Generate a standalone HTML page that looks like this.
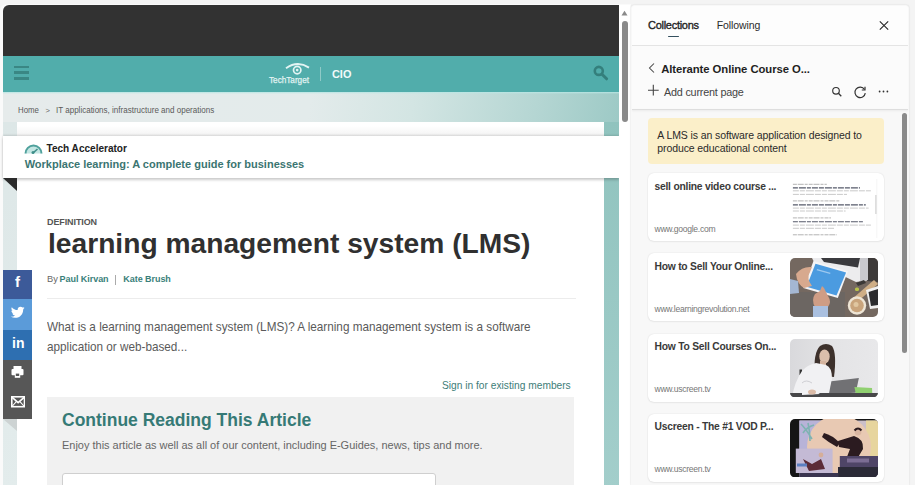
<!DOCTYPE html>
<html><head><meta charset="utf-8">
<style>
*{margin:0;padding:0;box-sizing:border-box}
html,body{width:915px;height:485px;overflow:hidden;background:#f4f4f4;font-family:"Liberation Sans",sans-serif}
.a{position:absolute}
.t{position:absolute;white-space:nowrap;line-height:1}
.b{font-weight:bold}
</style></head><body>
<!-- ===== LEFT PAGE ===== -->
<div class="a" style="left:0px;top:4px;width:631px;height:481px;background:#fafafa;border-radius:7px 0 0 0"></div>
<div class="a" style="left:3px;top:5px;width:616px;height:480px;overflow:hidden;border-radius:6px 0 0 0;background:#fff">
  <div class="a" style="left:0;top:0;width:616px;height:51px;background:#323232"></div>
  <div class="a" style="left:0;top:51px;width:616px;height:36px;background:#51adab"></div>
  <div class="a" style="left:0;top:87px;width:616px;height:400px;background:linear-gradient(100deg,#e6ebeb 0%,#e3ebeb 45%,#d3e5e3 60%,#b5d6d3 78%,#9ac8c4 92%,#90c3be 100%)"></div>
  <div class="a" style="left:0;top:117px;width:14px;height:370px;background:linear-gradient(180deg,#dde7e7,#e3ecec)"></div><div class="a" style="left:0;top:87px;width:616px;height:2px;background:linear-gradient(180deg,#b9e6e4,rgba(235,248,248,0))"></div>
  <div class="a" style="left:14px;top:117px;width:587px;height:370px;background:#fff"></div><div class="a" style="left:601px;top:117px;width:15px;height:370px;background:linear-gradient(180deg,#90c3be,#a3cecb)"></div>
</div>
<!-- hamburger -->
<div class="a" style="left:14px;top:65.5px;width:14.5px;height:2.3px;background:#3a8784"></div>
<div class="a" style="left:14px;top:71.4px;width:14.5px;height:2.3px;background:#3a8784"></div>
<div class="a" style="left:14px;top:77.4px;width:14.5px;height:2.3px;background:#3a8784"></div>
<!-- techtarget logo -->
<svg class="a" style="left:283px;top:62px" width="28" height="14" viewBox="0 0 28 14">
  <path d="M3 6.2 Q14.5 -1.8 26 5.6" fill="none" stroke="#e3f4f3" stroke-width="1.9"/>
  <circle cx="14.2" cy="8.1" r="3.7" fill="none" stroke="#e3f4f3" stroke-width="1.7"/>
  <circle cx="14.2" cy="8.1" r="1.3" fill="#e3f4f3"/>
</svg>
<div class="t" style="left:268.8px;top:74.9px;font-size:9.6px;color:#e3f4f3;transform:scaleX(0.852);transform-origin:0 0;-webkit-text-stroke:0.25px #e3f4f3">TechTarget</div>
<div class="a" style="left:320px;top:67px;width:1px;height:14px;background:#8fcac7"></div>
<div class="t b" style="left:332px;top:68.8px;font-size:10.9px;color:#f2fafa">CIO</div>
<!-- search -->
<svg class="a" style="left:590px;top:64px" width="20" height="18" viewBox="0 0 20 18">
  <circle cx="8.8" cy="6.9" r="4" fill="none" stroke="#347f7c" stroke-width="2.6"/>
  <line x1="12" y1="10.2" x2="16.6" y2="14.8" stroke="#347f7c" stroke-width="3" stroke-linecap="round"/>
</svg>
<!-- breadcrumb -->
<div class="t" style="left:17.9px;top:106.4px;font-size:8.7px;color:#5a5a5a;transform:scaleX(0.9);transform-origin:0 0">Home</div>
<div class="t" style="left:45.5px;top:107.3px;font-size:7.6px;color:#666">&gt;</div>
<div class="t" style="left:56.3px;top:106.4px;font-size:8.7px;color:#5a5a5a;transform:scaleX(0.9236);transform-origin:0 0">IT applications, infrastructure and operations</div>
<!-- sticky bar -->
<div class="a" style="left:17px;top:126px;width:587px;height:10px;background:linear-gradient(180deg,#fff,#f3f3f3)"></div><div class="a" style="left:3px;top:136px;width:616px;height:42px;background:#fff;box-shadow:0 -1px 2px rgba(0,0,0,0.13),0 1.5px 2.5px rgba(0,0,0,0.2)"></div>
<svg class="a" style="left:24px;top:142.5px" width="19" height="11" viewBox="0 0 19 11">
  <path d="M1.5 10.5 A8 8 0 0 1 17.5 10.5 Z" fill="#c4e6e3"/>
  <path d="M1.5 10.5 A8 8 0 0 1 17.5 10.5" fill="none" stroke="#4fa19c" stroke-width="2"/>
  <line x1="9" y1="10" x2="13.5" y2="6" stroke="#3f8f8a" stroke-width="1.6"/>
  <circle cx="9" cy="9.5" r="1.5" fill="#3f8f8a"/>
</svg>
<div class="t b" style="left:46.5px;top:143.8px;font-size:10.06px;color:#222">Tech Accelerator</div>
<div class="t b" style="left:24.7px;top:158.7px;font-size:11px;color:#3b7571">Workplace learning: A complete guide for businesses</div>
<!-- corner triangle -->
<svg class="a" style="left:3px;top:178px" width="14" height="13" viewBox="0 0 14 13"><path d="M0 0 H14 V13 Z" fill="#2b2b2b"/></svg>
<!-- article -->
<div class="t b" style="left:47px;top:218.2px;font-size:9px;letter-spacing:-0.1px;color:#555">DEFINITION</div>
<div class="t b" style="left:48px;top:229.2px;font-size:28.2px;color:#303030">learning management system (LMS)</div>
<div class="t" style="left:47px;top:274.7px;font-size:9.3px;color:#666">By</div>
<div class="t b" style="left:59.6px;top:275px;font-size:9px;letter-spacing:-0.05px;color:#3a7f7a">Paul Kirvan</div>
<div class="a" style="left:115px;top:274.5px;width:1px;height:10px;background:#aaa"></div>
<div class="t b" style="left:123.3px;top:275px;font-size:9px;letter-spacing:-0.05px;color:#3a7f7a">Kate Brush</div>
<div class="a" style="left:47px;top:298px;width:529px;height:1px;background:#ececec"></div>
<div class="t" style="left:47.3px;top:320px;font-size:13px;color:#5a5a5a;transform:scaleX(0.902);transform-origin:0 0">What is a learning management system (LMS)? A learning management system is a software</div>
<div class="t" style="left:47.3px;top:340.3px;font-size:13px;color:#5a5a5a;transform:scaleX(0.902);transform-origin:0 0">application or web-based...</div>
<div class="t" style="left:441.8px;top:379.5px;font-size:11.2px;color:#3d7d78;transform:scaleX(0.912);transform-origin:0 0">Sign in for existing members</div>
<div class="a" style="left:47px;top:397px;width:527px;height:90px;background:#f1f1f1"></div>
<div class="t b" style="left:62px;top:411.5px;font-size:17.5px;color:#367a76">Continue Reading This Article</div>
<div class="t" style="left:62px;top:438.7px;font-size:11.6px;color:#666;transform:scaleX(0.946);transform-origin:0 0">Enjoy this article as well as all of our content, including E-Guides, news, tips and more.</div>
<div class="a" style="left:62px;top:473px;width:374px;height:20px;background:#fff;border:1px solid #cfcfcf;border-radius:3px"></div>
<!-- social -->
<div class="a" style="left:3px;top:269.5px;width:29px;height:29.5px;background:#3c5a99"></div>
<div class="a" style="left:3px;top:299px;width:29px;height:30.5px;background:#5b9bd9"></div>
<div class="a" style="left:3px;top:329.5px;width:29px;height:30.5px;background:#2e6fb1"></div>
<div class="a" style="left:3px;top:360px;width:29px;height:30px;background:#575757"></div>
<div class="a" style="left:3px;top:390px;width:29px;height:28.5px;background:#565656"></div>
<svg class="a" style="left:3px;top:418.5px" width="14" height="12" viewBox="0 0 14 12"><path d="M0 0 H14 V12 Z" fill="#cdd3d3"/></svg>
<div class="t b" style="left:15px;top:274.3px;font-size:15px;color:#fff">f</div>
<svg class="a" style="left:11px;top:306px" width="14" height="13" viewBox="0 0 24 20">
<path fill="#fff" d="M23.6 2.3c-.9.4-1.8.6-2.8.8 1-.6 1.8-1.6 2.1-2.7-.9.6-2 1-3.1 1.2C18.9.6 17.6 0 16.2 0c-2.7 0-4.8 2.2-4.8 4.8 0 .4 0 .8.1 1.1C7.4 5.7 3.8 3.8 1.4.8 1 1.5.7 2.4.7 3.3c0 1.7.9 3.2 2.2 4-.8 0-1.5-.2-2.2-.6v.1c0 2.3 1.7 4.3 3.9 4.7-.4.1-.8.2-1.3.2-.3 0-.6 0-.9-.1.6 1.9 2.4 3.3 4.5 3.4-1.7 1.3-3.7 2.1-6 2.1-.4 0-.8 0-1.2-.1 2.1 1.4 4.7 2.2 7.4 2.2 8.9 0 13.7-7.4 13.7-13.7v-.6c1-.7 1.8-1.6 2.4-2.6z"/></svg>
<div class="t b" style="left:12px;top:335.5px;font-size:14px;color:#fff">in</div>
<svg class="a" style="left:11px;top:366px" width="13" height="12" viewBox="0 0 13 12">
<rect x="2.5" y="0" width="8" height="3" fill="#fff"/>
<rect x="0.5" y="3" width="12" height="6.2" rx="1" fill="#fff"/>
<rect x="3.8" y="7" width="5.4" height="4.8" fill="#fff"/>
<rect x="4.8" y="7.6" width="3.4" height="2.4" fill="#575757"/>
</svg>
<svg class="a" style="left:10.7px;top:396.4px" width="14.3" height="11.5" viewBox="0 0 14.3 11.5">
<rect x="0.8" y="0.8" width="12.7" height="9.9" fill="none" stroke="#fff" stroke-width="1.6"/>
<path d="M0.9 1.2 L7.15 6.6 L13.4 1.2" fill="none" stroke="#fff" stroke-width="1.6"/>
<path d="M1 10.5 L5.3 5.6 M13.3 10.5 L9 5.6" fill="none" stroke="#fff" stroke-width="1.1"/>
</svg>
<!-- page scrollbar -->
<div class="a" style="left:619px;top:5px;width:11px;height:480px;background:#fff"></div>
<svg class="a" style="left:621px;top:10px" width="7" height="6" viewBox="0 0 7 6"><path d="M0.5 5.5 L3.5 0.8 L6.5 5.5Z" fill="#8a8a8a"/></svg>
<div class="a" style="left:621.5px;top:21px;width:6px;height:100.5px;background:#8a8a8a;border-radius:3px"></div>

<!-- ===== SIDEBAR ===== -->
<div class="a" style="left:631px;top:5px;width:277.5px;height:480px;background:#f8f8f8;border-radius:3px 3px 0 0;box-shadow:0 0 1.5px rgba(0,0,0,0.16)"></div>
<div class="a" style="left:632px;top:6px;width:275.5px;height:38.8px;background:#fdfdfd;border-radius:2px 2px 0 0"></div>
<div class="a" style="left:632px;top:44.8px;width:275.5px;height:1px;background:#e4e4e4"></div>
<div class="a" style="left:632px;top:45.8px;width:275.5px;height:63.2px;background:#fbfbfb"></div>
<div class="a" style="left:632px;top:109px;width:275.5px;height:1px;background:#dedede;box-shadow:0 1px 2px rgba(0,0,0,0.08)"></div>
<div class="t" style="left:648px;top:19.8px;font-size:11px;letter-spacing:-0.28px;color:#1f1f1f;-webkit-text-stroke:0.35px #1f1f1f">Collections</div>
<div class="t" style="left:716.7px;top:20.3px;font-size:10.5px;letter-spacing:-0.1px;color:#2b2b2b">Following</div>
<div class="a" style="left:667.5px;top:35.8px;width:11.5px;height:1.4px;background:#34505f;border-radius:1px"></div>
<svg class="a" style="left:878px;top:20px" width="12" height="12" viewBox="0 0 12 12"><path d="M1.8 1.3 L10.2 9.7 M10.2 1.3 L1.8 9.7" stroke="#222" stroke-width="1.05"/></svg>
<svg class="a" style="left:647px;top:62px" width="10" height="12" viewBox="0 0 10 12"><path d="M7 1.5 L2.5 6 L7 10.5" fill="none" stroke="#444" stroke-width="1.05"/></svg>
<div class="t b" style="left:661.2px;top:63.7px;font-size:11.3px;letter-spacing:-0.07px;color:#1f1f1f">Alterante Online Course O...</div>
<svg class="a" style="left:647px;top:84px" width="13" height="13" viewBox="0 0 13 13"><path d="M6.3 0.8 V11.6 M1 6.2 H11.7" stroke="#444" stroke-width="1.1"/></svg>
<div class="t" style="left:664px;top:86.5px;font-size:10.8px;letter-spacing:-0.2px;color:#444">Add current page</div>
<svg class="a" style="left:830px;top:85px" width="13" height="13" viewBox="0 0 13 13"><circle cx="6" cy="5.8" r="3.3" fill="none" stroke="#333" stroke-width="1.15"/><path d="M8.4 8.3 L11.3 11.2" stroke="#333" stroke-width="1.3"/></svg>
<svg class="a" style="left:853px;top:85.5px" width="15" height="13" viewBox="0 0 15 13"><path d="M11.5 3.5 A5.2 5.2 0 1 0 12.3 7.2" fill="none" stroke="#333" stroke-width="1.2"/><path d="M12 0.8 V4 H8.8" fill="none" stroke="#333" stroke-width="1.2"/></svg>
<svg class="a" style="left:878px;top:89px" width="12" height="5" viewBox="0 0 12 5"><circle cx="1.6" cy="2.5" r="0.9" fill="#333"/><circle cx="5.5" cy="2.5" r="0.9" fill="#333"/><circle cx="9.4" cy="2.5" r="0.9" fill="#333"/></svg>
<!-- sidebar scrollbar -->
<div class="a" style="left:902px;top:112.5px;width:5px;height:240px;background:#8a8a8a;border-radius:3px"></div>
<!-- note -->
<div class="a" style="left:647.5px;top:117.5px;width:236.5px;height:46px;background:#fbefc9;border-radius:4px"></div>
<div class="t" style="left:657.3px;top:129.7px;font-size:10.5px;letter-spacing:-0.1px;color:#2a2a2a">A LMS is an software application designed to</div>
<div class="t" style="left:657.3px;top:142.5px;font-size:10.5px;letter-spacing:-0.1px;color:#2a2a2a">produce educational content</div>
<!-- cards -->
<div class="a" style="left:648px;top:173px;width:235.5px;height:68px;background:#fff;border-radius:6px;box-shadow:0 0 1.5px rgba(0,0,0,0.13),0 1px 2px rgba(0,0,0,0.05)"></div>
<div class="t b" style="left:654.5px;top:181.99px;font-size:10.3px;letter-spacing:-0.23px;color:#3a3a3a">sell online video course ...</div>
<div class="t" style="left:654.5px;top:225.17px;font-size:8.6px;letter-spacing:-0.3px;color:#777">www.google.com</div>
<svg class="a" style="left:790px;top:179px" width="88" height="59" viewBox="0 0 88 59"><line x1="2.9" y1="5.3" x2="36.8" y2="5.3" stroke="#aaa" stroke-width="0.9" stroke-dasharray="4 0.8 6 1 3 1"/><line x1="2.9" y1="8.9" x2="70" y2="8.9" stroke="#555a6a" stroke-width="1.1" stroke-dasharray="5 1 7 1 4 1 6 1"/><line x1="2.9" y1="11.8" x2="81.5" y2="11.8" stroke="#bbb" stroke-width="0.8" stroke-dasharray="6 1 5 1 8 1"/><line x1="2.9" y1="15.4" x2="57" y2="15.4" stroke="#bbb" stroke-width="0.8" stroke-dasharray="6 1 5 1 8 1"/><line x1="2.9" y1="21.9" x2="49.8" y2="21.9" stroke="#aaa" stroke-width="0.9" stroke-dasharray="4 0.8 6 1 3 1"/><line x1="2.9" y1="25.9" x2="75.8" y2="25.9" stroke="#555a6a" stroke-width="1.1" stroke-dasharray="5 1 7 1 4 1 6 1"/><line x1="2.9" y1="29.1" x2="78.6" y2="29.1" stroke="#bbb" stroke-width="0.8" stroke-dasharray="6 1 5 1 8 1"/><line x1="2.9" y1="32" x2="55.6" y2="32" stroke="#bbb" stroke-width="0.8" stroke-dasharray="6 1 5 1 8 1"/><line x1="2.9" y1="38.9" x2="41" y2="38.9" stroke="#aaa" stroke-width="0.9" stroke-dasharray="4 0.8 6 1 3 1"/><line x1="2.9" y1="42.8" x2="73" y2="42.8" stroke="#555a6a" stroke-width="1.1" stroke-dasharray="5 1 7 1 4 1 6 1"/><line x1="2.9" y1="46.1" x2="81.5" y2="46.1" stroke="#bbb" stroke-width="0.8" stroke-dasharray="6 1 5 1 8 1"/><line x1="2.9" y1="49.3" x2="44" y2="49.3" stroke="#bbb" stroke-width="0.8" stroke-dasharray="6 1 5 1 8 1"/><line x1="2.9" y1="55.8" x2="46.9" y2="55.8" stroke="#aaa" stroke-width="0.9" stroke-dasharray="4 0.8 6 1 3 1"/><rect x="85.4" y="16" width="1.2" height="19" fill="#c8c8c8"/><rect x="86.6" y="0" width="0.6" height="59" fill="#eee"/></svg>

<div class="a" style="left:648px;top:253px;width:235.5px;height:68px;background:#fff;border-radius:6px;box-shadow:0 0 1.5px rgba(0,0,0,0.13),0 1px 2px rgba(0,0,0,0.05)"></div>
<div class="t b" style="left:654.5px;top:261.99px;font-size:10.3px;letter-spacing:-0.23px;color:#3a3a3a">How to Sell Your Online...</div>
<div class="t" style="left:654.5px;top:305.17px;font-size:8.6px;letter-spacing:-0.3px;color:#777">www.learningrevolution.net</div>
<svg class="a" style="left:790px;top:258px" width="88" height="59" viewBox="0 0 88 59">
<defs><clipPath id="c2"><rect width="88" height="59" rx="5"/></clipPath></defs>
<g clip-path="url(#c2)">
<rect width="88" height="59" fill="#746860"/>
<rect x="0" y="34" width="55" height="25" fill="#6c6662"/>
<polygon points="22,0 80,0 80,22 66,24 24,4" fill="#ececee"/>
<polygon points="31,0 70,0 68,9.5 34,4" fill="#3a3a3e"/>
<polygon points="77,0 88,0 88,24 77,23" fill="#3d3a39"/>
<polygon points="70,0 78,0 78,22 70,24" fill="#c9c9cd"/>
<polygon points="23.5,3.1 58,13.3 47.8,40.1 13.3,29.9" fill="#f4f4f6"/>
<polygon points="25.5,5.7 56.1,14.6 46.5,37.6 16.5,28.7" fill="#4b9be0"/>
<rect x="27" y="11" width="14" height="1.2" fill="#9cc8ef" transform="rotate(16 27 11)"/>
<path d="M6 16 Q12 8 22 9 L20 14 Q16 20 22 28 L14 30 Q7 26 6 16 Z" fill="#d7a98e"/>
<polygon points="0,21 8,23 9,35 0,36" fill="#a4b7d3"/>
<path d="M32 28 L34 30 L38 38 Q42 44 38 49 L25 49 Q21 42 25 36 L30 33 Z" fill="#cf9d85"/>
<polygon points="23,48 38,48 38,59 23,59" fill="#aac0e0"/>
<polygon points="62,41 84,22 88,26 66,45" fill="#cfae86"/>
<polygon points="76,32 88,28 88,50 80,51" fill="#f0f0f0"/>
<polygon points="78.5,34 88,31 88,47 81,48" fill="#2b2b2e"/>
<circle cx="67" cy="47.5" r="9.2" fill="#eee5d5"/>
<circle cx="67" cy="47.5" r="6.8" fill="#c9a47c"/>
<circle cx="66" cy="46.5" r="2.5" fill="#e0c6a0"/>
<rect x="65" y="29.5" width="4" height="3.5" rx="1.5" fill="#b8c24a"/>
<polygon points="66,25 74,22 76,25 68,28" fill="#3b3836"/>
</g></svg>

<div class="a" style="left:648px;top:333.5px;width:235.5px;height:68px;background:#fff;border-radius:6px;box-shadow:0 0 1.5px rgba(0,0,0,0.13),0 1px 2px rgba(0,0,0,0.05)"></div>
<div class="t b" style="left:654.5px;top:342.49px;font-size:10.3px;letter-spacing:-0.23px;color:#3a3a3a">How To Sell Courses On...</div>
<div class="t" style="left:654.5px;top:385.47px;font-size:8.6px;letter-spacing:-0.3px;color:#777">www.uscreen.tv</div>
<svg class="a" style="left:790px;top:338.5px" width="88" height="58.5" viewBox="0 0 88 58.5">
<defs><clipPath id="c3"><rect width="88" height="58.5" rx="5"/></clipPath>
<linearGradient id="g3" x1="0" x2="1" y1="0" y2="0"><stop offset="0" stop-color="#d9d9dc"/><stop offset="0.5" stop-color="#e4e4e6"/><stop offset="1" stop-color="#e8e8ea"/></linearGradient></defs>
<g clip-path="url(#c3)">
<rect width="88" height="58.5" fill="url(#g3)"/>
<path d="M25 36 Q23 14 30 7 Q36 3 42 7 Q47 14 44 38 Z" fill="#3d312c"/>
<ellipse cx="34.5" cy="17.5" rx="5.2" ry="7" fill="#dbbfab"/>
<rect x="30" y="22" width="6" height="5" fill="#d4b39d"/>
<rect x="9.5" y="30.5" width="2.5" height="5.5" fill="#333"/>
<path d="M2 58 Q5 42 12 32 Q17 26 26 24 L36 26 Q42 28 42 40 L40 58 Z" fill="#f1f1f3"/>
<path d="M12 44 Q16 40 22 44" stroke="#cfcfd3" stroke-width="1" fill="none"/>
<polygon points="41.4,42.2 68.9,39 65.7,53.7 38.9,55" fill="#717174"/>
<polygon points="64.4,48 82,49 82.3,55 66,55.5" fill="#90d070"/>
<rect x="0" y="54" width="88" height="5" fill="#474749"/>
<path d="M12 52 Q20 48 30 55 L12 56 Z" fill="#f3f3f5"/>
<ellipse cx="22" cy="53" rx="4" ry="2.5" fill="#dcbca8"/>
</g></svg>

<div class="a" style="left:648px;top:414px;width:235.5px;height:68px;background:#fff;border-radius:6px;box-shadow:0 0 1.5px rgba(0,0,0,0.13),0 1px 2px rgba(0,0,0,0.05)"></div>
<div class="t b" style="left:654.5px;top:422.49px;font-size:10.3px;letter-spacing:-0.23px;color:#3a3a3a">Uscreen - The #1 VOD P...</div>
<div class="t" style="left:654.5px;top:465.47px;font-size:8.6px;letter-spacing:-0.3px;color:#777">www.uscreen.tv</div>
<svg class="a" style="left:790px;top:418.5px" width="88" height="58.5" viewBox="0 0 88 58.5">
<defs><clipPath id="c4"><rect width="88" height="58.5" rx="5"/></clipPath></defs>
<g clip-path="url(#c4)">
<rect width="88" height="58.5" fill="#151515"/>
<rect x="9.4" y="1.5" width="78.6" height="57" fill="#cbbfc9"/>
<rect x="9.4" y="1.5" width="24" height="30" fill="#b8b3d8"/>
<rect x="76" y="1.5" width="12" height="38" fill="#e7d59e"/>
<circle cx="49" cy="28" r="32" fill="#e8c9b3"/>
<path d="M11 5 Q16 10 22 20 M13 14 Q17 8 24 6 M18 4 Q20 12 20 22" stroke="#7eb3b2" stroke-width="1.6" fill="none"/>
<path d="M34 14 Q42 16 50 24 L47 28 Q38 23 32 18 Z" fill="#2b1b20"/>
<path d="M48 22 L64 17 Q74 20 73 30 L64 45 L55 43 L60 30 L49 28 Z" fill="#2b1b20"/>
<circle cx="68" cy="13" r="3.4" fill="#d9b6a2"/>
<path d="M64.5 11.5 Q68 7.5 71.5 11.5" stroke="#2b1b20" stroke-width="2" fill="none"/>
<rect x="49.8" y="37" width="38.2" height="21.5" fill="#4f4567"/>
<rect x="57" y="39.5" width="22" height="4" fill="#7c6d94"/>
<rect x="5.8" y="29.6" width="36.8" height="24.4" fill="#c4bad5"/>
<path d="M13 40 L22 45 L31 40 L35 50 L19 52 Z" fill="#5c2c38"/>
<circle cx="31" cy="36" r="2.4" fill="#d5ae99"/>
<rect x="7" y="44.5" width="10" height="3" fill="#5c80c2"/>
<rect x="48" y="48" width="40" height="10.5" fill="#2b2a37"/>
<rect x="9.4" y="54" width="39" height="4.5" fill="#3a3550"/>
</g></svg>
</body></html>
